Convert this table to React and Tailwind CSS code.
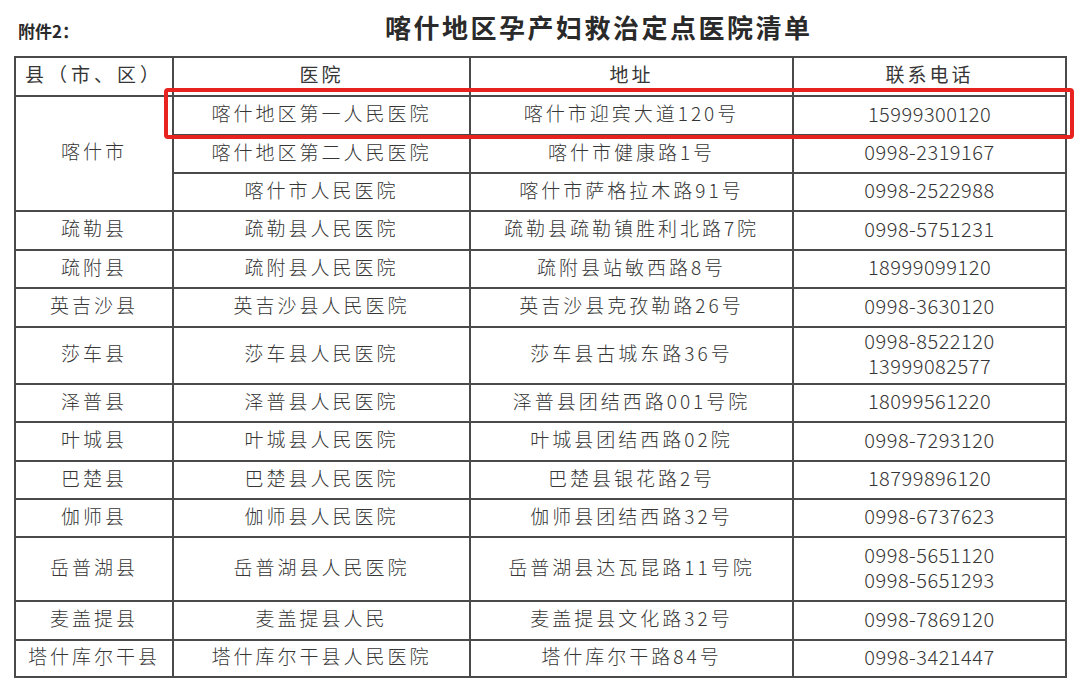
import React from "react";

const rows = [
  { county: "喀什市", span: 3, hospital: "喀什地区第一人民医院", addr: "喀什市迎宾大道120号", phones: ["15999300120"], h: "h-[39px]" },
  { hospital: "喀什地区第二人民医院", addr: "喀什市健康路1号", phones: ["0998-2319167"], h: "h-[38px]" },
  { hospital: "喀什市人民医院", addr: "喀什市萨格拉木路91号", phones: ["0998-2522988"], h: "h-[38px]" },
  { county: "疏勒县", hospital: "疏勒县人民医院", addr: "疏勒县疏勒镇胜利北路7院", phones: ["0998-5751231"], h: "h-[39px]" },
  { county: "疏附县", hospital: "疏附县人民医院", addr: "疏附县站敏西路8号", phones: ["18999099120"], h: "h-[38px]" },
  { county: "英吉沙县", hospital: "英吉沙县人民医院", addr: "英吉沙县克孜勒路26号", phones: ["0998-3630120"], h: "h-[39px]" },
  { county: "莎车县", hospital: "莎车县人民医院", addr: "莎车县古城东路36号", phones: ["0998-8522120", "13999082577"], h: "h-[55px]" },
  { county: "泽普县", hospital: "泽普县人民医院", addr: "泽普县团结西路001号院", phones: ["18099561220"], h: "h-[38px]" },
  { county: "叶城县", hospital: "叶城县人民医院", addr: "叶城县团结西路02院", phones: ["0998-7293120"], h: "h-[39px]" },
  { county: "巴楚县", hospital: "巴楚县人民医院", addr: "巴楚县银花路2号", phones: ["18799896120"], h: "h-[38px]" },
  { county: "伽师县", hospital: "伽师县人民医院", addr: "伽师县团结西路32号", phones: ["0998-6737623"], h: "h-[38px]" },
  { county: "岳普湖县", hospital: "岳普湖县人民医院", addr: "岳普湖县达瓦昆路11号院", phones: ["0998-5651120", "0998-5651293"], h: "h-[64px]" },
  { county: "麦盖提县", hospital: "麦盖提县人民", addr: "麦盖提县文化路32号", phones: ["0998-7869120"], h: "h-[39px]" },
  { county: "塔什库尔干县", hospital: "塔什库尔干县人民医院", addr: "塔什库尔干路84号", phones: ["0998-3421447"], h: "h-[37px]" },
];

const cell = "border-2 border-[#4a4a4a] px-0 pt-0 pb-[5px] text-center align-middle";
const cn = "text-[19px] leading-[24px] tracking-[3px] font-light";
const num = "text-[20px] leading-[25px] tracking-[0.5px] font-light";

export default function App() {
  return (
    <div className="relative w-[1080px] h-[685px] bg-white text-[#363636] font-['Noto_Sans_CJK_SC',sans-serif] overflow-hidden">
      {/* title line */}
      <div className="flex items-center h-[56px] pb-[4px]">
        <div className="w-[385px] pl-[18px] pt-[10px] text-[17px] font-semibold text-[#2a2a2a]">附件2：</div>
        <h1 className="text-[26px] font-bold tracking-[2.5px] text-[#2a2a2a]">喀什地区孕产妇救治定点医院清单</h1>
      </div>

      <table className="ml-[14px] w-[1051px] table-fixed border-collapse">
        <colgroup>
          <col className="w-[158px]" />
          <col className="w-[297px]" />
          <col className="w-[323px]" />
          <col className="w-[273px]" />
        </colgroup>
        <thead>
          <tr className="h-[39px]">
            <th className={`${cell} ${cn} font-normal tracking-[4px]`}>县（市、区）</th>
            <th className={`${cell} ${cn} font-normal`}>医院</th>
            <th className={`${cell} ${cn} font-normal`}>地址</th>
            <th className={`${cell} ${cn} font-normal`}>联系电话</th>
          </tr>
        </thead>
        <tbody>
          {rows.map((r, i) => (
            <tr key={i} className={r.h}>
              {r.county && (
                <td rowSpan={r.span || 1} className={`${cell} ${cn}`}>{r.county}</td>
              )}
              <td className={`${cell} ${cn}`}>{r.hospital}</td>
              <td className={`${cell} ${cn}`}>{r.addr}</td>
              <td className={`${cell} ${num}`}>
                {r.phones.map((p) => (
                  <div key={p}>{p}</div>
                ))}
              </td>
            </tr>
          ))}
        </tbody>
      </table>

      {/* highlight box over the first hospital */}
      <div className="absolute left-[164px] top-[88px] w-[910px] h-[51px] border-4 border-[#e8231f] rounded-[4px] pointer-events-none" />
    </div>
  );
}
